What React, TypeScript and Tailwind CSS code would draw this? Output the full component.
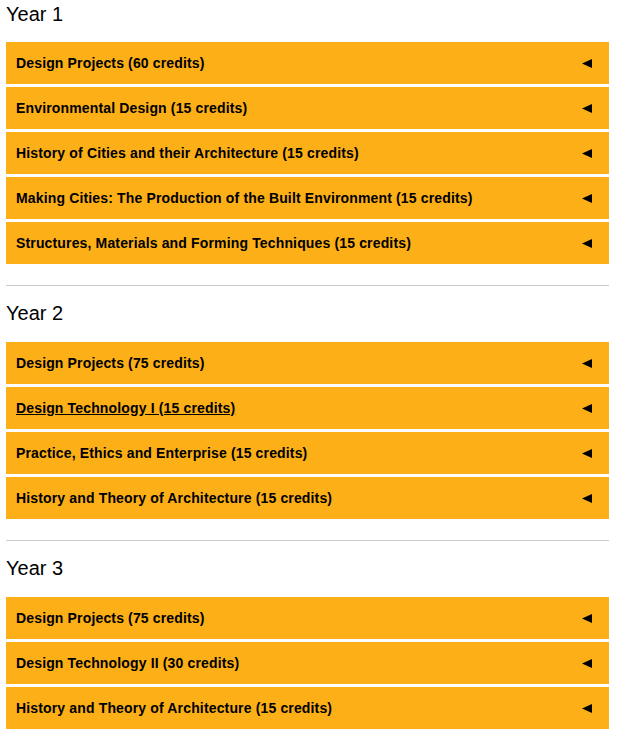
import React from "react";

const years = [
  {
    title: "Year 1",
    modules: [
      "Design Projects (60 credits)",
      "Environmental Design (15 credits)",
      "History of Cities and their Architecture (15 credits)",
      "Making Cities: The Production of the Built Environment (15 credits)",
      "Structures, Materials and Forming Techniques (15 credits)",
    ],
  },
  {
    title: "Year 2",
    modules: [
      "Design Projects (75 credits)",
      "Design Technology I (15 credits)",
      "Practice, Ethics and Enterprise (15 credits)",
      "History and Theory of Architecture (15 credits)",
    ],
  },
  {
    title: "Year 3",
    modules: [
      "Design Projects (75 credits)",
      "Design Technology II (30 credits)",
      "History and Theory of Architecture (15 credits)",
    ],
  },
];

const Arrow = () => (
  <svg width="10" height="9" viewBox="0 0 10 9" className="shrink-0">
    <polygon points="0,4.5 10,0 10,9" fill="#000" />
  </svg>
);

const App = () => {
  return (
    <div className="w-[603px] ml-[6px] bg-white text-black font-['Liberation_Sans',Arial,sans-serif]">
      {years.map((year, i) => (
        <div key={year.title}>
          {i > 0 && <div className="mt-[21px] h-px bg-[#cccccc]" />}
          <h2
            className={`${i > 0 ? "mt-[13px] mb-[15px]" : "mb-[14px]"} h-[28px] leading-[28px] text-[20px] font-normal`}
          >
            {year.title}
          </h2>
          <div className="flex flex-col gap-[3px]">
            {year.modules.map((m) => (
              <div
                key={m}
                className="h-[42px] bg-[#fcaf17] flex items-center justify-between pl-[10px] pr-[17px] cursor-pointer"
              >
                <span
                  className={`text-[14px] tracking-[0.15px] font-bold ${
                    m === "Design Technology I (15 credits)" ? "underline" : ""
                  }`}
                >
                  {m}
                </span>
                <Arrow />
              </div>
            ))}
          </div>
        </div>
      ))}
    </div>
  );
};

export default App;
